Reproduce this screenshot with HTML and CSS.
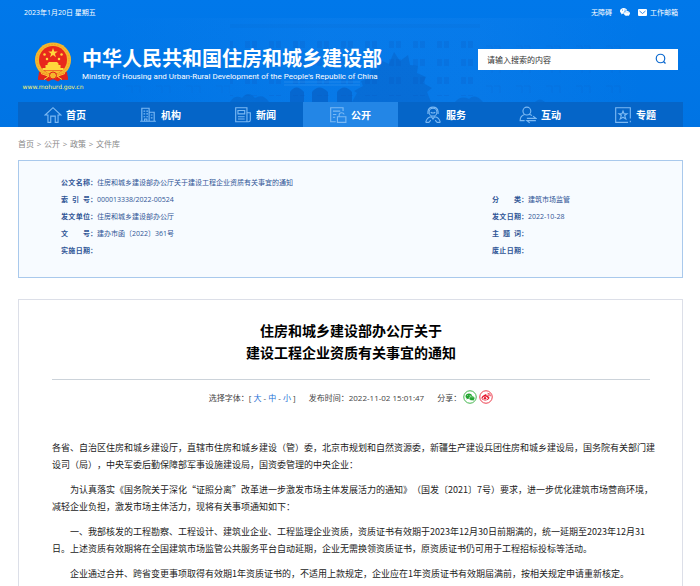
FILE: index.html
```html
<!DOCTYPE html>
<html lang="zh-CN">
<head>
<meta charset="utf-8">
<meta name="viewport" content="width=device-width, initial-scale=1">
<title>住房和城乡建设部办公厅关于建设工程企业资质有关事宜的通知</title>
<link rel="stylesheet" href="styles.css">
</head>
<body>
<header class="header">
  <svg class="skyline" viewBox="0 0 700 127" preserveAspectRatio="xMidYMid slice" aria-hidden="true">
    <defs>
      <pattern id="win" width="24" height="18" patternUnits="userSpaceOnUse">
        <path d="M5 5h5v7H5zM12 5h5v7h-5z" fill="#0a62cc"/>
      </pattern>
      <pattern id="wall" width="30" height="20" patternUnits="userSpaceOnUse">
        <path d="M6 6h6v7M14 6h6v7" fill="none" stroke="#0a62cc"/>
      </pattern>
      <linearGradient id="haze">
        <stop offset="0" stop-color="#2b8df2" stop-opacity="0"/>
        <stop offset=".4" stop-color="#2b8df2" stop-opacity=".16"/>
        <stop offset=".7" stop-color="#2b8df2" stop-opacity=".16"/>
        <stop offset="1" stop-color="#2b8df2" stop-opacity="0"/>
      </linearGradient>
    </defs>
    <path d="M110 18H640V102H110z" fill="url(#haze)"/>
    <path d="M230 24H480V28H230z" fill="#0a5fc8" opacity=".12"/>
    <path d="M120 48h110v54H120z" fill="url(#wall)" opacity=".2"/>
    <path d="M230 30H475v66H230z" fill="url(#win)" opacity=".3"/>
    <path d="M475 34H630v66H475z" fill="url(#wall)" opacity=".28"/>
    <g fill="#0656b8" opacity=".5">
      <path d="M290 102V92q6-9 14 0v10zM312 102V92q7-9 16 0v10zM337 102V92q7-9 15 0v10z"/>
    </g>
    <path d="M284 85H360M284 82H360" stroke="#5aacf8" opacity=".3"/>
    <g fill="#0756b5" opacity=".32">
      <path d="M352 102l5-9-3-2 9-5-2-5 9-3 1-8 8-1 3-8 7 3 5-12 6 9 8-6 2 10 8 1-1 7 9 4-3 6 9 5-5 4 4 10z"/>
      <path d="M375 102l3-9 7-5 6-9 6 7 8-4 5 9 7 3 4 8z"/>
      <path d="M230 102q5-8 12-4 6-8 13 0 8-5 14 4zM455 102q6-7 14-3 6-6 14 3zM535 102q5-5 10 0z"/>
    </g>
  </svg>

  <div class="topbar">
    <span>2023年1月20日 星期五</span>
    <nav class="toplinks" aria-label="快捷入口">
      <a href="#">无障碍</a>
      <a href="#" aria-label="微信">
        <svg width="10" height="8" viewBox="0 0 20 16"><path fill="#fff" fill-rule="evenodd" d="M7.500 0C3.300 0 0 2.700 0 6c0 1.900 1 3.500 2.700 4.600L2 13l2.800-1.500 2.500.5C6.500 8 9.500 5 14.500 4.800 13.700 2 11 0 7.500 0zM5 3.200a1 1 0 1 1 0 2 1 1 0 0 1 0-2zm5 0a1 1 0 1 1 0 2 1 1 0 0 1 0-2zM14 6c-3.400 0-6 2.100-6 4.800s2.600 4.700 6 4.700l2-.3 2.400.8-.6-1.900C19.200 13.200 20 12.100 20 10.800 20 8.100 17.400 6 14 6zm-2 2.800a.9.900 0 1 1 0 1.800.9.900 0 0 1 0-1.800zm4 0a.9.900 0 1 1 0 1.800.9.900 0 0 1 0-1.800z"/></svg>
      </a>
      <a href="#" class="mail">
        <svg width="9" height="7" viewBox="0 0 18 14"><rect width="18" height="14" rx="2" fill="#fff"/><path d="M3 4l6 5 6-5" fill="none" stroke="#0a6fe0" stroke-width="1.600"/></svg>
        工作邮箱</a>
    </nav>
  </div>

  <div class="masthead">
    <a class="brand" href="#">
      <span class="mark">
        <svg width="38" height="40" viewBox="0 0 76 80" aria-hidden="true">
          <path d="M12 56L8 76l12-3 8 6 10-5 10 5 8-6 12 3-4-20z" fill="#e2231a"/>
          <ellipse cx="38" cy="36" rx="36" ry="35" fill="#f6b62c"/>
          <ellipse cx="38" cy="36" rx="32" ry="31" fill="none" stroke="#f0a024" stroke-width="2" stroke-dasharray="3 3"/>
          <circle cx="38" cy="36" r="28" fill="#e8281c"/>
          <path d="M38 12l2.500 7h7l-5.700 4.300 2.200 7-6-4.300-6 4.300 2.200-7-5.700-4.300h7z" fill="#ffd83c"/>
          <g fill="#ffd83c"><circle cx="21" cy="25" r="2.500"/><circle cx="55" cy="25" r="2.500"/><circle cx="26" cy="34" r="2.500"/><circle cx="50" cy="34" r="2.500"/></g>
          <path d="M27 43l3-3h16l3 3v3h4v6h6v4H17v-4h6v-6h4z" fill="#ffd83c"/>
          <path d="M20 57h36l-7 5H27z" fill="#f8bd30"/>
          <path d="M10 60l18 7-8 9-12-1zM66 60l-18 7 8 9 12-1z" fill="#e2231a"/>
          <circle cx="38" cy="67" r="7" fill="#f6b62c" stroke="#e2231a" stroke-width="2"/>
          <path d="M14 63l14 5M62 63l-14 5M20 75l9-6M56 75l-9-6" stroke="#ffd03a" stroke-width="2"/>
        </svg>
        <span class="domain">www.mohurd.gov.cn</span>
      </span>
      <span class="names">
        <strong class="name">中华人民共和国住房和城乡建设部</strong>
        <span class="name-en">Ministry of Housing and Urban-Rural Development of the People's Republic of China</span>
      </span>
    </a>
    <form class="search" role="search">
      <input type="text" aria-label="搜索" placeholder="请输入搜索的内容">
      <button type="button" aria-label="搜索">
        <svg width="12" height="12" viewBox="0 0 24 24" fill="none" stroke="#0a68cf" stroke-width="2.400"><circle cx="11" cy="11" r="8.500"/><path d="M17 17l4 4"/></svg>
      </button>
    </form>
  </div>

  <nav class="nav" aria-label="主导航">
    <a href="#"><svg class="icon" viewBox="0 0 32 32"><path d="M2 16L16 3l14 13h-5v13h-5V18h-8v11H7V16z"/></svg>首页</a>
    <a href="#"><svg class="icon" viewBox="0 0 32 32"><path d="M5 27V4h13v23M2 27h28M18 11h9v16M8 9h3m2 0h3M8 14h3m2 0h3M8 19h3m2 0h3M10 27v-4h4v4M21 16h3M21 21h3"/></svg>机构</a>
    <a href="#"><svg class="icon" viewBox="0 0 32 32"><path d="M3 3h20v25H3zM23 12h6v13q0 3-3 3H22M7 8h12v6H7zM7 19h12M7 23h12"/></svg>新闻</a>
    <a href="#" class="active" aria-current="page"><svg class="icon" viewBox="0 0 32 32"><path d="M12 28H3V3h22v6M7 9h13M7 15h6M7 20h4M15 19h15v10H15zM18 19v-3q0-4 4-4t5 3"/></svg>公开</a>
    <a href="#"><svg class="icon" viewBox="0 0 32 32"><circle cx="16" cy="11" r="7"/><path d="M7 14V10q1-8 9-8t9 8v4M12 11q4 3 8 0M3 29q2-9 10-10l3 4 3-4q8 1 10 10M3 29h6M23 29h6M12 25l-3 4M20 25l3 4"/></svg>服务</a>
    <a href="#"><svg class="icon" viewBox="0 0 32 32"><circle cx="14" cy="9" r="7"/><path d="M10 15q-8 2-8 11h8M18 15q3 0 5 2M14 22h16l-5-4M30 26H14l5 4"/></svg>互动</a>
    <a href="#"><svg class="icon" viewBox="0 0 32 32"><path d="M29 22V3H3v26h22M29 26v3M16 9l2 5h5l-4 3 2 6-5-3-5 3 2-6-4-3h5z"/></svg>专题</a>
  </nav>
</header>

<main class="page">
  <nav class="crumbs" aria-label="面包屑">
    <a href="#">首页</a><span>&gt;</span><a href="#">公开</a><span>&gt;</span><a href="#">政策</a><span>&gt;</span><a href="#">文件库</a>
  </nav>

  <section class="info">
    <dl>
      <div class="wide"><dt><span>公文名称</span>：</dt><dd>住房和城乡建设部办公厅关于建设工程企业资质有关事宜的通知</dd></div>
      <div><dt><span>索 引 号</span>：</dt><dd>000013338/2022-00524</dd></div>
      <div><dt><span>分 类</span>：</dt><dd>建筑市场监管</dd></div>
      <div><dt><span>发文单位</span>：</dt><dd>住房和城乡建设部办公厅</dd></div>
      <div><dt><span>发文日期</span>：</dt><dd>2022-10-28</dd></div>
      <div><dt><span>文 号</span>：</dt><dd>建办市函〔2022〕361号</dd></div>
      <div><dt><span>主 题 词</span>：</dt><dd></dd></div>
      <div><dt><span>实施日期</span>：</dt><dd></dd></div>
      <div><dt><span>废止日期</span>：</dt><dd></dd></div>
    </dl>
  </section>

  <article class="article">
    <h1>住房和城乡建设部办公厅关于<br>建设工程企业资质有关事宜的通知</h1>
    <div class="meta">
      <span>选择字体：[ <a href="#">大</a> - <a href="#">中</a> - <a href="#">小</a> ]</span>
      <span>发布时间：2022-11-02 15:01:47</span>
      <span class="share">分享：
        <a href="#" aria-label="分享到微信"><svg width="14" height="14" viewBox="0 0 28 28"><circle cx="14" cy="14" r="12.500" fill="#fff" stroke="#2fae3a" stroke-width="1.800"/><path fill="#1fa52c" d="M12 7c-4 0-7 2.400-7 5.500 0 1.700.9 3.200 2.400 4.200L7 19l2.600-1.300 2 .3c0-3.500 3-6 7-6-.6-3-3.200-5-6.600-5z"/><path fill="#1fa52c" stroke="#fff" stroke-width=".8" d="M18 12c-3.300 0-5.700 2-5.700 4.600s2.400 4.600 5.700 4.600l1.700-.2 2.300 1-.5-1.900c1.300-.8 2-2.100 2-3.500C23.500 14 21 12 18 12z"/><g fill="#fff"><circle cx="9.500" cy="11" r=".9"/><circle cx="14" cy="11" r=".9"/><circle cx="16" cy="15.500" r=".8"/><circle cx="20" cy="15.500" r=".8"/></g></svg></a>
        <a href="#" aria-label="分享到微博"><svg width="14" height="14" viewBox="0 0 28 28"><circle cx="14" cy="14" r="12.500" fill="#fff" stroke="#ea2b3c" stroke-width="1.800"/><path fill="#e6162d" d="M12 9c2-1 3.500 0 3 2.400 2.500-1 4.500-.4 3.900 1.900 2 .6 2.500 2.200 1.500 3.900-1.400 2.400-4.500 3.800-7.900 3.800-4 0-7.500-2-7.500-5 0-2.400 3.500-5.800 7-7z"/><ellipse cx="12.300" cy="16.300" rx="5" ry="3.500" fill="#fff"/><circle cx="12" cy="16.500" r="2.500" fill="#e6162d"/><path d="M17 6.500q6-.5 6 6M17.500 9.300q3-.2 3 3" fill="none" stroke="#e6162d" stroke-width="1.500"/></svg></a>
      </span>
    </div>
    <div class="text">
      <p class="to">各省、自治区住房和城乡建设厅，直辖市住房和城乡建设（管）委，北京市规划和自然资源委，新疆生产建设兵团住房和城乡建设局，国务院有关部门建设司（局），中央军委后勤保障部军事设施建设局，国资委管理的中央企业：</p>
      <p>为认真落实《国务院关于深化“证照分离”改革进一步激发市场主体发展活力的通知》（国发〔2021〕7号）要求，进一步优化建筑市场营商环境，减轻企业负担，激发市场主体活力，现将有关事项通知如下：</p>
      <p>一、我部核发的工程勘察、工程设计、建筑业企业、工程监理企业资质，资质证书有效期于2023年12月30日前期满的，统一延期至2023年12月31日。上述资质有效期将在全国建筑市场监管公共服务平台自动延期，企业无需换领资质证书，原资质证书仍可用于工程招标投标等活动。</p>
      <p>企业通过合并、跨省变更事项取得有效期1年资质证书的，不适用上款规定，企业应在1年资质证书有效期届满前，按相关规定申请重新核定。</p>
    </div>
  </article>
</main>
</body>
</html>
```
FILE: styles.css
```css
* { box-sizing: border-box; }

body {
  margin: 0;
  min-height: 100vh;
  display: flex;
  flex-direction: column;
  background: #fff;
  color: #222;
  font-family: "Open Sans", "Noto Sans CJK SC", sans-serif;
  font-size: 8px;
  text-spacing-trim: space-all;
}

a { color: inherit; text-decoration: none; }
svg { display: block; flex: none; }

/* Header */
.header {
  position: relative;
  padding: 0 17px 0 18px;
  background: linear-gradient(#0078ea, #0074e4);
  color: #fff;
}
.skyline {
  position: absolute;
  inset: 0;
  width: 100%;
  height: 100%;
}
.topbar, .masthead, .nav { position: relative; }

.topbar {
  display: flex;
  justify-content: space-between;
  align-items: center;
  height: 24px;
  padding: 0 5px 0 6px;
  font-size: 7px;
}
.toplinks { display: flex; align-items: center; gap: 8px; }
.mail { display: flex; align-items: center; gap: 3px; }

.masthead {
  display: flex;
  justify-content: space-between;
  align-items: center;
  height: 78px;
  padding: 0 5px 0 6px;
}
.brand { display: flex; align-items: center; }
.mark {
  display: flex;
  flex-direction: column;
  align-items: center;
  width: 58px;
  padding-top: 8px;
}
.domain {
  color: #fdf06a;
  font: 6px/10px "DejaVu Sans", sans-serif;
  white-space: nowrap;
}
.names { display: flex; flex-direction: column; padding-top: 2px; }
.name { font-size: 20px; line-height: 26px; }
.name-en {
  font: 8px/10px Roboto, "Liberation Sans", sans-serif;
  white-space: nowrap;
}

.search {
  display: flex;
  width: 200px;
  height: 21px;
  margin-bottom: 8px;
  background: #fff;
}
.search input {
  flex: 1;
  min-width: 0;
  padding: 0 9px;
  border: 0;
  background: none;
  font: inherit;
  color: #333;
}
.search input::placeholder { color: #333; opacity: 1; }
.search button {
  display: grid;
  place-items: center;
  width: 34px;
  padding: 0;
  border: 0;
  background: none;
}

.nav {
  display: grid;
  grid-template-columns: repeat(7, 1fr);
  background: #0565c8;
}
.nav a {
  display: flex;
  align-items: center;
  justify-content: center;
  gap: 4px;
  height: 25px;
  padding-right: 1px;
  font-size: 10px;
  font-weight: bold;
}
.nav .active { background: #2386e6; }
.icon {
  width: 18px;
  height: 18px;
  fill: none;
  stroke: #7cb9f3;
  stroke-width: 2;
}

/* Page */
.page {
  flex: 1;
  display: flex;
  flex-direction: column;
  padding: 0 17px 0 18px;
}
.crumbs {
  display: flex;
  height: 33px;
  line-height: 33px;
  color: #888;
}
.crumbs span { width: 10px; text-align: center; }

.info {
  padding: 13px 42px 18px;
  border: 1px solid #a9c9ec;
  background: #f7fbff;
  color: #2f5596;
  font-size: 7px;
  line-height: 17px;
}
.info dl {
  display: grid;
  grid-template-columns: 431px 1fr;
  margin: 0;
}
.info dl div { display: flex; height: 17px; }
.info .wide { grid-column: 1 / -1; }
.info dt {
  display: flex;
  width: 36px;
  font-weight: bold;
}
.info dt span { flex: 1; text-align-last: justify; }
.info dd { margin: 0; }

.article {
  flex: 1;
  margin-top: 21px;
  padding: 20px 32px 0 33px;
  border: 1px solid #dcdfe8;
  border-bottom: 0;
}
h1 {
  margin: 0;
  padding-bottom: 15px;
  border-bottom: 1px solid #ccd3da;
  color: #000;
  font-size: 14px;
  line-height: 22px;
  text-align: center;
}
.meta {
  display: flex;
  justify-content: center;
  align-items: center;
  gap: 13px;
  height: 34px;
  color: #444;
}
.meta a { color: #1c6fd6; }
.share { display: flex; align-items: center; gap: 2px; }

.text {
  margin: 25px -8px 0 0;
  font-family: "Noto Sans CJK SC", sans-serif;
  font-size: 9px;
  line-height: 17px;
}
.text p { margin: 0 0 8px; text-indent: 2em; }
.text .to { text-indent: 0; }
```
